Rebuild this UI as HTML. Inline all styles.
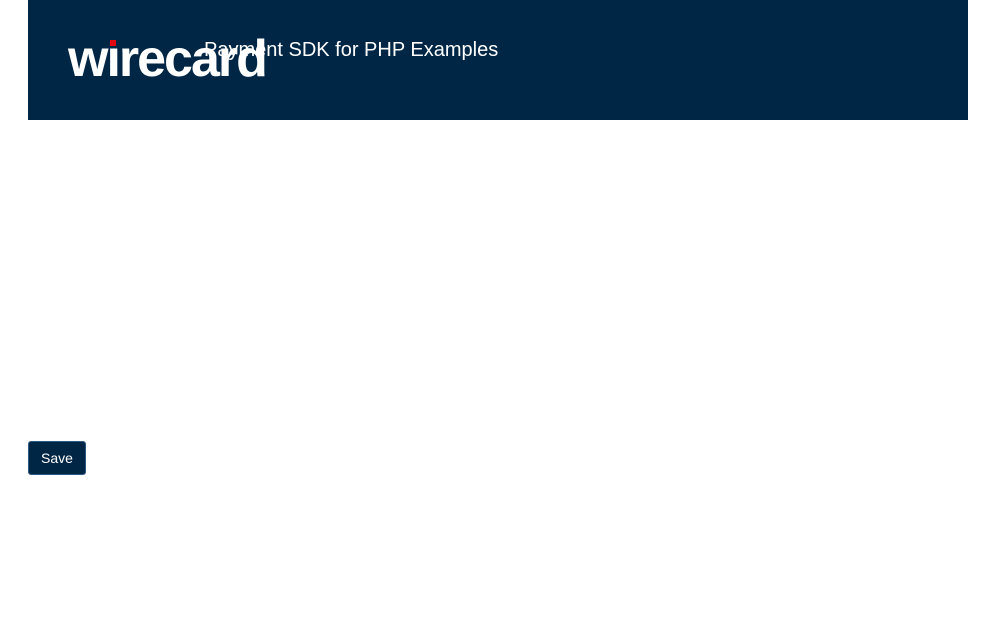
<!DOCTYPE html>
<html><head><style>
body{margin:0;background:#fff;font-family:"Liberation Sans",Arial,sans-serif;}
.hdr{position:absolute;left:28px;top:0;width:940px;height:120px;background:#002646;}
.logo{position:absolute;left:40px;top:29px;font-size:52px;font-weight:bold;color:#fff;letter-spacing:-2px;line-height:60px;z-index:2;}
.cover{position:absolute;left:79px;top:32px;width:12px;height:16px;background:#002646;z-index:3;}
.dot{position:absolute;left:82px;top:40px;width:6px;height:6px;background:#e30613;z-index:4;}
.title{position:absolute;left:176px;top:38px;font-size:20px;color:#fff;line-height:24px;z-index:1;}
.btn{position:absolute;left:28px;top:441px;width:56px;height:32px;background:#002646;border:1px solid #2a5a85;border-radius:3px;color:#fff;font-size:14px;line-height:32px;text-align:center;}
</style></head><body>
<div class="hdr">
<div class="title">Payment SDK for PHP Examples</div>
<div class="logo">wirecard</div>
<div class="cover"></div>
<div class="dot"></div>
</div>
<div class="btn">Save</div>
</body></html>
